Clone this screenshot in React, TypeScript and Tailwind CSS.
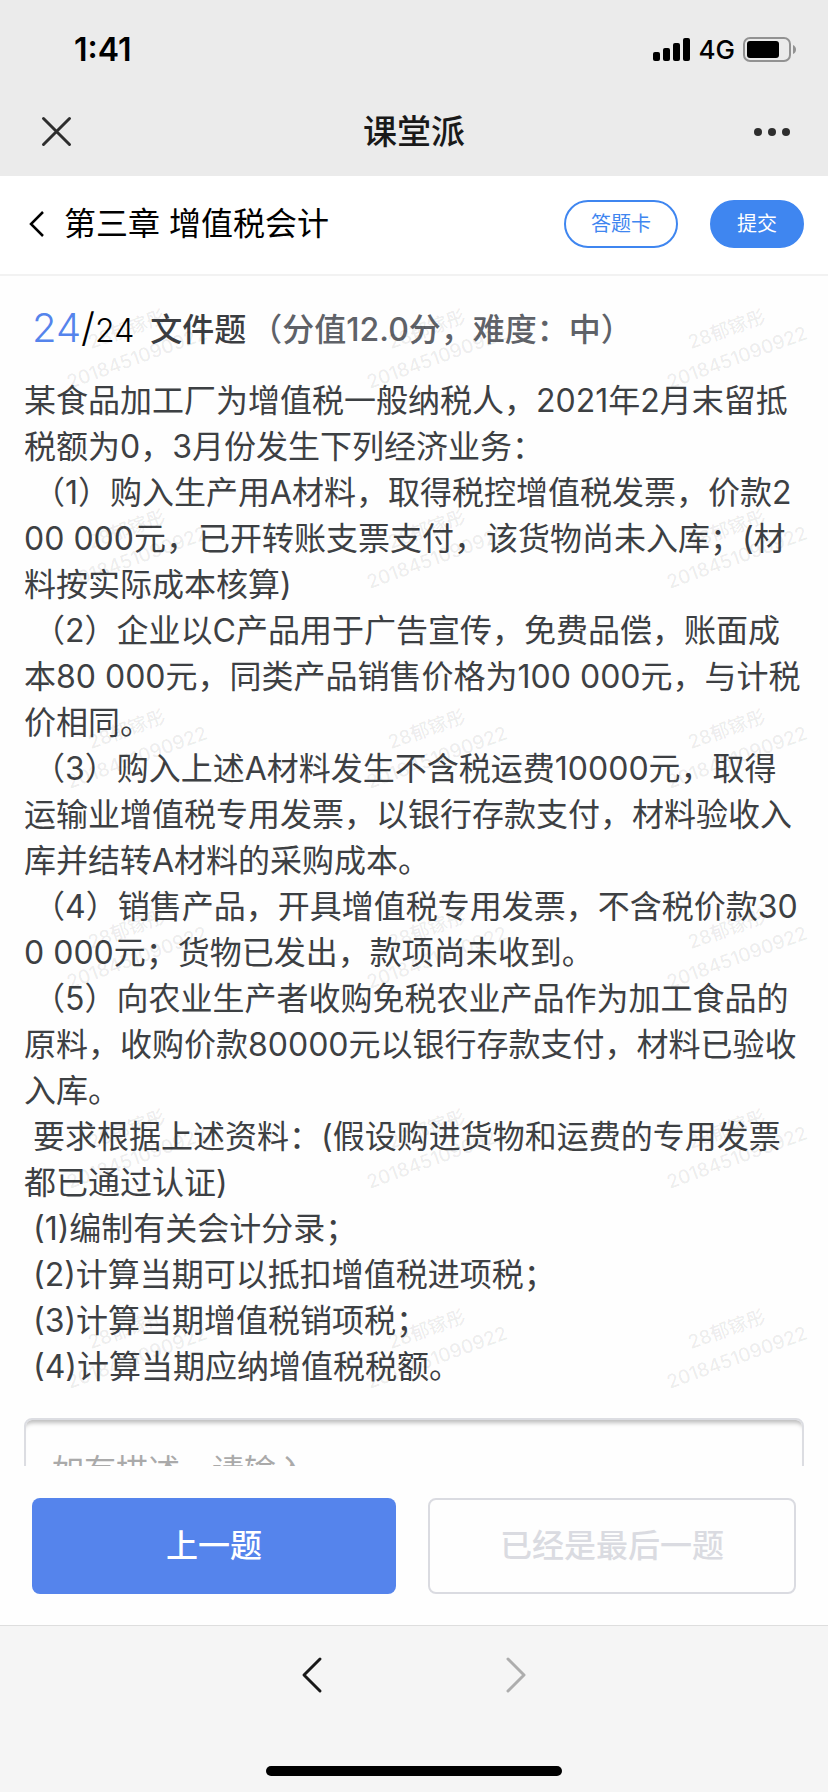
import React from "react";

const paragraphs = [
  "某食品加工厂为增值税一般纳税人，2021年2月末留抵税额为0，3月份发生下列经济业务：",
  " （1）购入生产用A材料，取得税控增值税发票，价款200 000元，已开转账支票支付，该货物尚未入库；(材料按实际成本核算)",
  " （2）企业以C产品用于广告宣传，免费品偿，账面成本80 000元，同类产品销售价格为100 000元，与计税价相同。",
  " （3）购入上述A材料发生不含税运费10000元，取得运输业增值税专用发票，以银行存款支付，材料验收入库并结转A材料的采购成本。",
  " （4）销售产品，开具增值税专用发票，不含税价款300 000元；货物已发出，款项尚未收到。",
  " （5）向农业生产者收购免税农业产品作为加工食品的原料，收购价款80000元以银行存款支付，材料已验收入库。",
  " 要求根据上述资料：(假设购进货物和运费的专用发票都已通过认证)",
  " (1)编制有关会计分录；",
  " (2)计算当期可以抵扣增值税进项税；",
  " (3)计算当期增值税销项税；",
  " (4)计算当期应纳增值税税额。",
];

const StatusBar = () => {
  return (
    <div className="flex h-[88px] items-center justify-between pt-3 pr-8 pl-[74px] text-black">
      <span className="text-[32px] leading-none font-semibold">1:41</span>
      <div className="flex items-center gap-2">
        <svg width="38" height="24" viewBox="0 0 38 24" fill="currentColor">
          <rect x="0" y="14" width="7" height="9" rx="2" />
          <rect x="10" y="10" width="7" height="13" rx="2" />
          <rect x="20" y="5" width="7" height="18" rx="2" />
          <rect x="30" y="0" width="7" height="23" rx="2" />
        </svg>
        <span className="text-[26px] leading-none font-medium">4G</span>
        <svg width="53" height="26" viewBox="0 0 53 26">
          <rect
            x="1"
            y="1"
            width="46"
            height="23"
            rx="6"
            fill="none"
            stroke="#929292"
            strokeWidth="2"
          />
          <rect x="4" y="4" width="32" height="17" rx="3" fill="#000" />
          <path d="M50 8 Q53 9.500 53 12.500 Q53 15.500 50 17 Z" fill="#929292" />
        </svg>
      </div>
    </div>
  );
};

const NavBar = () => {
  return (
    <div className="flex h-[88px] items-center justify-between px-[38px] text-[#191919]">
      <button type="button" aria-label="关闭" className="w-20">
        <svg
          width="36"
          height="36"
          viewBox="0 0 36 36"
          fill="none"
          stroke="#2e2e2e"
          strokeWidth="3"
          strokeLinecap="round"
        >
          <path d="M5.500 4.500 L31.500 30.500 M31.500 4.500 L5.500 30.500" />
        </svg>
      </button>
      <h1 className="text-[34px] leading-none font-medium">课堂派</h1>
      <button type="button" aria-label="更多" className="flex w-20 justify-end">
        <svg width="36" height="8" viewBox="0 0 36 8" fill="#2e2e2e">
          <circle cx="4" cy="4" r="4" />
          <circle cx="18" cy="4" r="4" />
          <circle cx="32" cy="4" r="4" />
        </svg>
      </button>
    </div>
  );
};

const ChapterHeader = () => {
  return (
    <header className="flex h-[100px] shrink-0 items-center border-b-2 border-[#f2f2f2] bg-white pr-6 pb-0.5 pl-7">
      <button type="button" aria-label="返回" className="mr-4">
        <svg
          width="20"
          height="28"
          viewBox="0 0 20 28"
          fill="none"
          stroke="#000"
          strokeWidth="2.500"
        >
          <path d="M15 2 L3 14 L15 26" />
        </svg>
      </button>
      <h2 className="text-[32px] leading-none text-black">第三章 增值税会计</h2>
      <div className="ml-auto flex gap-8">
        <button
          type="button"
          className="h-12 rounded-full border-2 border-[#3f86f0] px-[25px] text-xl leading-none text-[#3f86f0]"
        >
          答题卡
        </button>
        <button
          type="button"
          className="h-12 rounded-full border-2 border-[#3f86f0] bg-[#3f86f0] px-[25px] text-xl leading-none text-white"
        >
          提交
        </button>
      </div>
    </header>
  );
};

// Repeating student name and number laid over the question
const Watermark = () => {
  return (
    <div
      aria-hidden="true"
      className="pointer-events-none absolute -top-8 -left-[18px] grid grid-cols-[repeat(3,300px)] auto-rows-[200px]"
    >
      {Array.from({ length: 18 }, (_, i) => (
        <div
          key={i}
          className="flex -rotate-20 flex-col items-center justify-center text-[19px] leading-[30px] font-medium text-black/8"
        >
          <span>28郁镓彤</span>
          <span>2018451090922</span>
        </div>
      ))}
    </div>
  );
};

const Question = () => {
  return (
    <main className="relative min-h-0 flex-1 overflow-hidden bg-[#fefefe] px-6 pt-7">
      <div className="flex h-[52px] items-center pl-2 text-[32px] font-medium whitespace-pre">
        <span className="flex items-baseline pb-1 leading-none font-light text-black">
          <span className="text-[40px] text-[#5584ec]">24</span>
          <span className="text-[40px]">/</span>
          <span className="text-[32px]">24</span>
        </span>
        <span className="ml-4 text-[#3b3d41]">文件题</span>
        <span className="ml-1 text-[#5f6268]">（分值12.0分，难度：中）</span>
      </div>
      <div className="mt-[22px] text-[32px] leading-[46px] break-all whitespace-pre-wrap text-[#3d4043]">
        {paragraphs.map((text) => (
          <p key={text}>{text}</p>
        ))}
      </div>
      <textarea
        aria-label="答案描述"
        placeholder="如有描述，请输入"
        rows={5}
        className="mt-7 block w-full resize-none rounded-lg border-2 border-[#dcdde2] bg-transparent px-[26px] py-7 text-[32px] leading-[46px] shadow-[inset_0_7px_4px_-4px_rgba(0,0,0,0.25)] placeholder:text-[#aaaaaa]"
      />
      <Watermark />
    </main>
  );
};

const QuestionActions = () => {
  return (
    <div className="flex shrink-0 gap-8 bg-[#fefefe] px-8 pt-8 pb-[31px] text-[32px] font-medium">
      <button
        type="button"
        className="h-24 flex-1 rounded-lg bg-[#5584ec] text-white"
      >
        上一题
      </button>
      <button
        type="button"
        disabled
        className="h-24 flex-1 rounded-lg border-2 border-[#dadbe1] text-[#dadbe1]"
      >
        已经是最后一题
      </button>
    </div>
  );
};

const BrowserBar = () => {
  return (
    <footer className="flex shrink-0 flex-col items-center border-t border-[#dedede] bg-[#f5f5f5] pt-7 pb-4">
      <nav className="flex gap-[172px]">
        <button type="button" aria-label="后退">
          <svg
            width="30"
            height="42"
            viewBox="0 0 30 42"
            fill="none"
            stroke="#191919"
            strokeWidth="3"
            strokeLinecap="round"
            strokeLinejoin="round"
          >
            <path d="M22 5 L6 21 L22 37" />
          </svg>
        </button>
        <button type="button" aria-label="前进" disabled>
          <svg
            width="30"
            height="42"
            viewBox="0 0 30 42"
            fill="none"
            stroke="#adadad"
            strokeWidth="3"
            strokeLinecap="round"
            strokeLinejoin="round"
          >
            <path d="M8 5 L24 21 L8 37" />
          </svg>
        </button>
      </nav>
      <div className="mt-[70px] h-[10px] w-[296px] rounded-full bg-black" />
    </footer>
  );
};

export default function App() {
  return (
    <div
      lang="zh-CN"
      className="flex h-screen flex-col bg-white font-['Inter','Noto_Sans_CJK_SC',sans-serif]"
    >
      <div className="shrink-0 bg-[#ebebeb]">
        <StatusBar />
        <NavBar />
      </div>
      <ChapterHeader />
      <Question />
      <QuestionActions />
      <BrowserBar />
    </div>
  );
}
